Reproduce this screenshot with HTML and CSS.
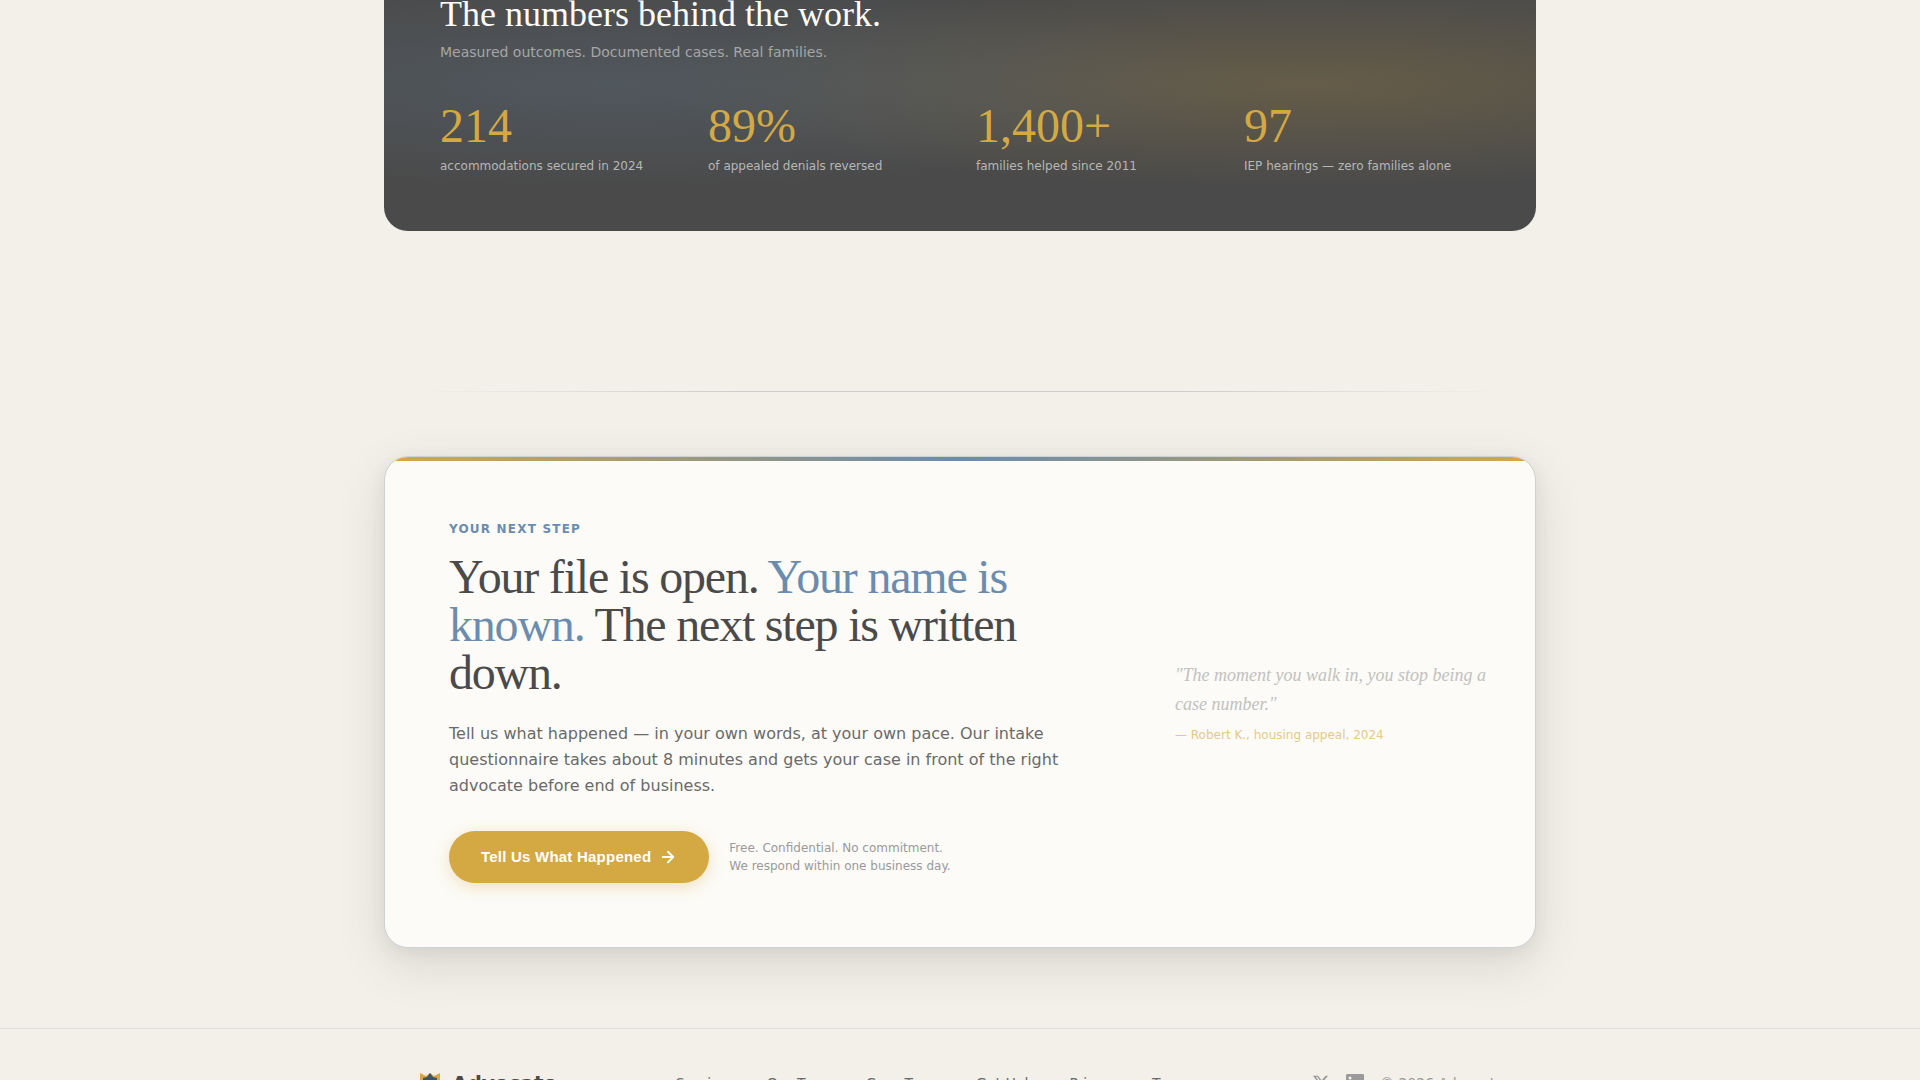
FILE: index.html
```html
<!DOCTYPE html>
<html lang="en">
<head>
<meta charset="utf-8">
<meta name="viewport" content="width=device-width, initial-scale=1">
<title>Advocate</title>
<link rel="stylesheet" href="styles.css">
</head>
<body>
<main class="main">
  <section class="stats">
    <h2 class="stats-title">The numbers behind the work.</h2>
    <p class="stats-sub">Measured outcomes. Documented cases. Real families.</p>
    <div class="stats-grid">
      <div><div class="stat-value">214</div><div class="stat-label">accommodations secured in 2024</div></div>
      <div><div class="stat-value">89%</div><div class="stat-label">of appealed denials reversed</div></div>
      <div><div class="stat-value">1,400+</div><div class="stat-label">families helped since 2011</div></div>
      <div><div class="stat-value">97</div><div class="stat-label">IEP hearings — zero families alone</div></div>
    </div>
  </section>

  <hr class="divider">

  <section class="cta">
    <div class="cta-body">
      <p class="eyebrow">Your next step</p>
      <h2 class="cta-title">Your file is open. <span class="accent">Your name is known.</span> The next step is written down.</h2>
      <p class="cta-text">Tell us what happened — in your own words, at your own pace. Our intake questionnaire takes about 8 minutes and gets your case in front of the right advocate before end of business.</p>
      <div class="cta-actions">
        <button class="btn" type="button">Tell Us What Happened
          <svg width="18" height="18" viewBox="0 0 24 24" fill="none" stroke="currentColor" stroke-width="2.5" stroke-linecap="round" stroke-linejoin="round" aria-hidden="true"><path d="M5 12h14M12 5l7 7-7 7"/></svg>
        </button>
        <p class="note">Free. Confidential. No commitment.<br>We respond within one business day.</p>
      </div>
    </div>
    <figure class="quote">
      <blockquote class="quote-text">"The moment you walk in, you stop being a case number."</blockquote>
      <figcaption class="quote-by">— Robert K., housing appeal, 2024</figcaption>
    </figure>
  </section>
</main>

<footer class="footer">
  <div class="footer-inner">
    <a class="brand" href="#">
      <svg width="28" height="28" viewBox="0 0 28 28" aria-hidden="true"><path d="M4 4l6 3 4-3 4 3 6-3v12c0 5-5 8-10 10-5-2-10-5-10-10z" fill="#d4a843"/><path d="M14 4l3 4 4 1v7c0 3-4 5-7 6-3-1-7-3-7-6V9l4-1z" fill="#3d5366"/></svg>
      Advocate
    </a>
    <nav class="links">
      <a href="#">Services</a>
      <a href="#">Our Team</a>
      <a href="#">Case Types</a>
      <a href="#">Get Help</a>
      <a href="#">Privacy</a>
      <a href="#">Terms</a>
    </nav>
    <div class="social">
      <a href="#" aria-label="X"><svg width="18" height="18" viewBox="0 0 24 24" fill="currentColor"><path d="M18.244 2.25h3.308l-7.227 8.26 8.502 11.24H16.17l-5.214-6.817L4.99 21.75H1.68l7.73-8.835L1.254 2.25H8.08l4.713 6.231zm-1.161 17.52h1.833L7.084 4.126H5.117z"/></svg></a>
      <a href="#" aria-label="LinkedIn"><svg width="18" height="18" viewBox="0 0 24 24" fill="currentColor"><path d="M20.447 20.452h-3.554v-5.569c0-1.328-.027-3.037-1.852-3.037-1.853 0-2.136 1.445-2.136 2.939v5.667H9.351V9h3.414v1.561h.046c.477-.9 1.637-1.85 3.37-1.85 3.601 0 4.267 2.37 4.267 5.455v6.286zM5.337 7.433a2.062 2.062 0 0 1-2.063-2.065 2.064 2.064 0 1 1 2.063 2.065zm1.782 13.019H3.555V9h3.564v11.452zM22.225 0H1.771C.792 0 0 .774 0 1.729v20.542C0 23.227.792 24 1.771 24h20.451C23.2 24 24 23.227 24 22.271V1.729C24 .774 23.2 0 22.222 0h.003z"/></svg></a>
      <span>© 2026 Advocate</span>
    </div>
  </div>
</footer>
</body>
</html>
```
FILE: styles.css
```css
:root {
  --cream: #f3f0e9;
  --ink: #4a4a4a;
  --gold: #d4a843;
  --blue: #6b8cae;
  --serif: "Liberation Serif", serif;
  --sans: "DejaVu Sans", sans-serif;
}

* { box-sizing: border-box; margin: 0; padding: 0; }

body {
  height: 100vh;
  overflow: hidden;
  background: var(--cream);
  color: var(--ink);
  font-family: var(--sans);
}

a { color: inherit; text-decoration: none; }
svg { display: block; }

/* The page rests scrolled part-way into the numbers panel. */
.main {
  max-width: 1152px;
  margin: -62px auto 80px;
}

.stats {
  padding: 56px 56px 57px;
  border-radius: 24px;
  background:
    radial-gradient(ellipse at 20% 50%, rgba(107, 140, 174, 0.2) 0%, transparent 50%),
    radial-gradient(ellipse at 80% 50%, rgba(212, 168, 67, 0.2) 0%, transparent 50%),
    var(--ink);
}

.stats-title {
  font: 400 36px/40px var(--serif);
  color: #fdfcf8;
}

.stats-sub {
  margin-top: 8px;
  font-size: 14px;
  line-height: 20px;
  color: #a5a6a6;
}

.stats-grid {
  display: grid;
  grid-template-columns: repeat(4, 1fr);
  gap: 32px;
  margin-top: 40px;
}

.stat-value {
  font: 400 48px/48px var(--serif);
  color: var(--gold);
}

.stat-label {
  margin-top: 8px;
  font-size: 12px;
  line-height: 16px;
  color: #b7b7b5;
}

.divider {
  height: 1px;
  margin: 160px 32px 64px;
  border: 0;
  background: linear-gradient(90deg, transparent, #cccdca 30%, #cccdca 70%, transparent);
}

.cta {
  position: relative;
  display: grid;
  grid-template-columns: minmax(0, 1fr) 320px;
  align-items: center;
  gap: 80px;
  padding: 64px 40px 64px 64px;
  overflow: hidden;
  border: 1px solid #cdd2d6;
  border-radius: 24px;
  background: #fcfbf7;
  box-shadow: 0 16px 48px rgba(74, 74, 74, 0.15), 0 4px 16px rgba(74, 74, 74, 0.08);
}

.cta::before {
  content: "";
  position: absolute;
  inset: 0 0 auto;
  height: 4px;
  background: linear-gradient(90deg, var(--gold), var(--blue), var(--gold));
}

.eyebrow {
  font-size: 12px;
  font-weight: 700;
  line-height: 16px;
  letter-spacing: 0.1em;
  text-transform: uppercase;
  color: var(--blue);
}

.cta-title {
  margin-top: 16px;
  font: 400 48px/48px var(--serif);
  letter-spacing: -0.025em;
}

.accent { color: var(--blue); }

.cta-text {
  margin-top: 24px;
  font-size: 16px;
  line-height: 26px;
  color: #6a6a6a;
}

.cta-actions {
  display: flex;
  align-items: center;
  gap: 20px;
  margin-top: 32px;
}

.btn {
  display: flex;
  align-items: center;
  gap: 8px;
  height: 52px;
  padding: 0 32px;
  border: 0;
  border-radius: 26px;
  background: var(--gold);
  color: #fff;
  font: 700 15px/20px "Liberation Sans", sans-serif;
  letter-spacing: 0.015em;
  white-space: nowrap;
  box-shadow: 0 4px 16px rgba(212, 168, 67, 0.3);
}

.note {
  font-size: 12px;
  line-height: 18px;
  color: #9a9a9a;
}

.quote { opacity: 0.6; }

.quote-text {
  font: italic 400 18px/29px var(--serif);
  color: #9a9a9a;
}

.quote-by {
  margin-top: 8px;
  font-size: 12px;
  line-height: 16px;
  color: var(--gold);
}

.footer {
  padding: 40px 0;
  border-top: 1px solid #e0ded9;
  background: #f2f0e8;
}

.footer-inner {
  display: flex;
  align-items: center;
  justify-content: space-between;
  max-width: 1152px;
  margin: 0 auto;
  padding: 0 32px;
  font-size: 14px;
}

.brand {
  display: flex;
  align-items: center;
  gap: 8px;
  font-size: 20px;
  font-weight: 700;
}

.links {
  display: flex;
  gap: 32px;
  color: #6a6a6a;
}

.social {
  display: flex;
  align-items: center;
  gap: 16px;
  color: #9a9a9a;
}
```
